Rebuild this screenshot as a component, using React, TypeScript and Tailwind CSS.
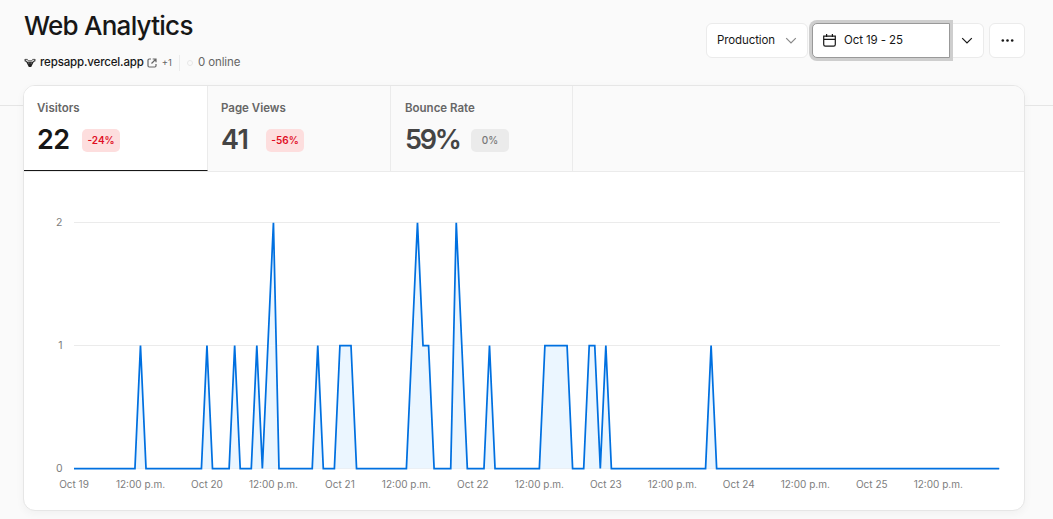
import { ReactNode } from "react";

const HOURS = 168;
const hits: Record<number, number> = {
  12: 1, 24: 1, 29: 1, 33: 1, 35: 1, 36: 2, 44: 1, 48: 1, 49: 1, 50: 1,
  61: 1, 62: 2, 63: 1, 64: 1, 69: 2, 70: 1, 75: 1, 85: 1, 86: 1, 87: 1, 88: 1, 89: 1,
  93: 1, 94: 1, 96: 1, 115: 1,
};

const stats = [
  { label: "Visitors", value: "22", change: "-24%", active: true, width: "w-[184px]", pad: "pl-[13px]", valueWidth: "w-[45px]" },
  { label: "Page Views", value: "41", change: "-56%", active: false, width: "w-[183px]", pad: "pl-[13px]", valueWidth: "w-[45px]" },
  { label: "Bounce Rate", value: "59%", change: "0%", active: false, width: "w-[182px]", pad: "pl-[14px]", valueWidth: "w-[66px]" },
];

const Chart = () => {
  const x = (h: number) => 50 + h * 5.54;
  const y = (v: number) => 296.5 - v * 123;
  const points = Array.from({ length: HOURS }, (_, h) => `${x(h).toFixed(2)},${y(hits[h] || 0)}`).join(" ");
  const ticks = Array.from({ length: 14 }, (_, i) => ({
    x: x(i * 12),
    label: i % 2 === 0 ? `Oct ${19 + i / 2}` : "12:00 p.m.",
  }));

  return (
    <svg width="1000" height="338" viewBox="0 0 1000 338" className="block">
      <defs>
        <clipPath id="plot">
          <rect x="49" y="50.5" width="927" height="248" />
        </clipPath>
      </defs>
      {[0, 1, 2].map((v) => (
        <g key={v}>
          <line x1="50" x2="976" y1={y(v)} y2={y(v)} stroke="#ebebeb" />
          <text x="38.5" y={y(v) + 3} textAnchor="end" fontSize="10.5" fill="#7d7d7d">{v}</text>
        </g>
      ))}
      <polygon points={`50,296.5 ${points} 975.2,296.5`} fill="#ebf6ff" />
      <polyline points={points} fill="none" stroke="#0070e0" strokeWidth="1.75" clipPath="url(#plot)" />
      {ticks.map((t) => (
        <text key={t.x} x={t.x} y="316" textAnchor="middle" fontSize="10" fill="#7d7d7d">{t.label}</text>
      ))}
    </svg>
  );
};

const Button = ({ children, className }: { children: ReactNode; className: string }) => (
  <button className={`flex h-[35px] items-center border border-[#ebebeb] bg-white ${className}`}>{children}</button>
);

const Chevron = ({ color }: { color: string }) => (
  <svg width="12" height="8" viewBox="0 0 12 8" fill="none" stroke={color} strokeWidth="1.2">
    <path d="M1.2 1.2 6 6l4.8-4.8" />
  </svg>
);

const Header = () => (
  <header className="flex h-[85px] justify-between pr-[28px] pl-6">
    <div>
      <h1 className="mt-[8px] text-[26px] leading-9 font-medium tracking-[-0.75px]">Web Analytics</h1>
      <div className="mt-[10px] flex h-[18px] items-center text-[11.5px] text-[#666]">
        <svg width="12" height="12" viewBox="0 0 12 12" className="mr-1">
          <path d="M1.2 2v1.8l1.8 1M10.8 2v1.8L9 4.8" fill="none" stroke="#444" strokeWidth="1.3" />
          <path d="M1 2.4h2.4l.8 1.4h3.6l.8-1.4H11" fill="none" stroke="#555" strokeWidth="1" />
          <path d="M2.2 4.8h7.6L7.2 10H4.8z" fill="#222" />
          <path d="M4.2 5.6h1.2v1H4.2zM6.6 5.6h1.2v1H6.6z" fill="#999" />
        </svg>
        <span className="text-[11.5px] font-medium tracking-[-0.15px] text-[#171717]">repsapp.vercel.app</span>
        <svg width="10" height="10" viewBox="0 0 10 10" fill="none" stroke="#666" strokeWidth="1.2" className="ml-[3px]">
          <path d="M4 1H2.2Q1 1 1 2.2v5.6Q1 9 2.2 9h5.6Q9 9 9 7.8V6M5.7 1H9v3.3M9 1 4.5 5.5" />
        </svg>
        <span className="ml-[5px] text-[9.5px]">+1</span>
        <span className="ml-[7px] h-4 w-px bg-[#ebebeb]" />
        <span className="mr-[5px] ml-[7px] h-[6px] w-[6px] rounded-full border border-[#e8e8e8]" />
        <span className="tracking-[-0.1px]">0 online</span>
      </div>
    </div>

    <div className="mt-[23px] flex text-[11.5px]">
      <Button className="mr-1 w-[102px] justify-between rounded-md pr-[10px] pl-[10px]">
        <span className="pt-px tracking-[-0.1px]">Production</span>
        <Chevron color="#888" />
      </Button>
      <Button className="relative w-[138px] rounded-l-[5px] border-[#999]! pl-[10px] ring-[3px] ring-[#cecece]">
        <svg width="13" height="13" viewBox="0 0 13 13" fill="none" stroke="#171717" strokeWidth="1.2">
          <path d="M.7 2.1h11.6v8.5q0 1.6-1.6 1.6H2.3Q.7 12.2.7 10.6zM.7 5.4h11.6M3.6 0v3M9.4 0v3" />
        </svg>
        <span className="ml-[8px] tracking-[-0.1px]">Oct 19 - 25</span>
      </Button>
      <Button className="mr-[5px] w-[34px] justify-center rounded-r-md border-l-0!">
        <Chevron color="#171717" />
      </Button>
      <Button className="w-[36px] justify-center rounded-md">
        <svg width="13" height="3" viewBox="0 0 13 3" fill="#171717">
          <circle cx="1.8" cy="1.5" r="1.3" />
          <circle cx="6.5" cy="1.5" r="1.3" />
          <circle cx="11.2" cy="1.5" r="1.3" />
        </svg>
      </Button>
    </div>
  </header>
);

const App = () => {
  return (
    <main className="h-[519px] w-[1053px] overflow-hidden bg-[#fafafa] font-['Inter','Liberation_Sans',sans-serif] text-[#171717]">
      <Header />
      <div className="flex">
        <div className="mt-5 h-px w-[23px] bg-[#e5e5e5]" />
        <section className="h-[426px] w-[1002px] overflow-hidden rounded-xl border border-[#e6e6e6] bg-white shadow-[0_3px_8px_rgba(0,0,0,0.04)]">
          <div className="flex h-[86px] border-b border-[#ebebeb] bg-[#fafafa]">
            {stats.map((s) => (
              <div
                key={s.label}
                className={`${s.width} ${s.pad} shrink-0 border-r border-[#ebebeb] pt-[13px] ${s.active ? "border-b border-b-[#171717] bg-white" : ""}`}
              >
                <p className="text-[11.5px] leading-[18px] font-semibold text-[#666]">{s.label}</p>
                <div className="mt-[6px] flex items-center">
                  <span className={`${s.valueWidth} text-[27px] leading-[34px] font-semibold ${s.change === "0%" ? "tracking-[-2.3px]" : "tracking-[-0.6px]"} ${s.active ? "text-[#171717]" : "text-[#444]"}`}>{s.value}</span>
                  <span className={`flex h-[23px] w-[38px] items-center justify-center rounded-[5px] text-[10px] ${s.change === "0%" ? "bg-[#ebebeb] font-medium text-[#777]" : "bg-[#fddede] font-semibold text-[#e00d24]"}`}>
                    {s.change}
                  </span>
                </div>
              </div>
            ))}
          </div>
          <Chart />
        </section>
        <div className="mt-5 h-px flex-1 bg-[#e5e5e5]" />
      </div>
    </main>
  );
};

export default App;
